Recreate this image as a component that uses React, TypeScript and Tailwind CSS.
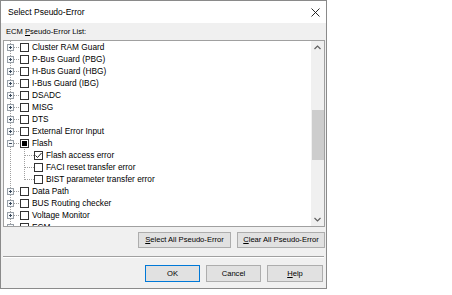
import React from 'react';

type Row = {
  label: string;
  level: 0 | 1;
  state?: 'on' | 'mixed';
  expanded?: boolean;
  last?: boolean;
};

const rows: Row[] = [
  { label: 'Cluster RAM Guard', level: 0 },
  { label: 'P-Bus Guard (PBG)', level: 0 },
  { label: 'H-Bus Guard (HBG)', level: 0 },
  { label: 'I-Bus Guard (IBG)', level: 0 },
  { label: 'DSADC', level: 0 },
  { label: 'MISG', level: 0 },
  { label: 'DTS', level: 0 },
  { label: 'External Error Input', level: 0 },
  { label: 'Flash', level: 0, expanded: true, state: 'mixed' },
  { label: 'Flash access error', level: 1, state: 'on' },
  { label: 'FACI reset transfer error', level: 1 },
  { label: 'BIST parameter transfer error', level: 1, last: true },
  { label: 'Data Path', level: 0 },
  { label: 'BUS Routing checker', level: 0 },
  { label: 'Voltage Monitor', level: 0 },
  { label: 'ECM', level: 0 },
];

const dot = { stroke: '#a0a0a0', strokeWidth: 1, strokeDasharray: '1 1' };

function TreeLines({ row }: { row: Row }) {
  if (row.level === 1) {
    return (
      <svg width="30" height="12" className="shrink-0">
        <line x1="6.5" y1="0" x2="6.5" y2="12" {...dot} />
        <line x1="20.5" y1="0" x2="20.5" y2={row.last ? 7 : 12} {...dot} />
        <line x1="21" y1="6.5" x2="30" y2="6.5" {...dot} />
      </svg>
    );
  }
  return (
    <svg width="16" height="12" className="shrink-0">
      <line x1="6.5" y1="0" x2="6.5" y2="12" {...dot} />
      <line x1="10" y1="6.5" x2="16" y2="6.5" {...dot} />
      <rect x="3.5" y="3.5" width="6" height="6" fill="#f7f9fb" stroke="#98a0a8" />
      <line x1="5" y1="6.5" x2="8" y2="6.5" stroke="#3a4a5c" />
      {!row.expanded && <line x1="6.5" y1="5" x2="6.5" y2="8" stroke="#3a4a5c" />}
    </svg>
  );
}

function Check({ state }: { state?: 'on' | 'mixed' }) {
  return (
    <span className="w-[9px] h-[9px] shrink-0 border border-[#333333] bg-white flex items-center justify-center">
      {state === 'mixed' && <span className="w-[5px] h-[5px] bg-black" />}
      {state === 'on' && (
        <svg width="7" height="7" viewBox="0 0 7 7">
          <polyline points="0.5,3.5 2.5,5.5 6.5,1" fill="none" stroke="#222" strokeWidth="1" />
        </svg>
      )}
    </span>
  );
}

function Btn({ children, w, primary }: { children: React.ReactNode; w: string; primary?: boolean }) {
  return (
    <div
      className={`${w} h-full flex items-center justify-center bg-[#e1e1e1] border ${
        primary ? 'border-[#0078d7]' : 'border-[#adadad]'
      } text-[7.6px] text-black`}
    >
      {children}
    </div>
  );
}

export default function App() {
  return (
    <div className="w-[452px] h-[295px] bg-white font-['Liberation_Sans',Arial,sans-serif]">
      <div className="w-[327px] h-[289px] border border-[#8a8a8a] bg-[#f0f0f0] flex flex-col">
        {/* title bar */}
        <div className="h-[22px] bg-white flex items-center justify-between pl-[7px] pr-[6px]">
          <span className="text-[8.5px] text-black">Select Pseudo-Error</span>
          <svg width="9" height="9" viewBox="0 0 9 9">
            <path d="M0.5 0.5 L8.5 8.5 M8.5 0.5 L0.5 8.5" stroke="#111" strokeWidth="0.9" />
          </svg>
        </div>

        <div className="h-[17px] flex items-center pl-[5px] text-[7.6px] text-black">
          ECM&nbsp;<span className="underline">P</span>seudo-Error List:
        </div>

        {/* list */}
        <div className="h-[187px] ml-[2px] mr-[1px] border border-[#a0a0a0] bg-white flex overflow-hidden">
          <div className="flex-1 pl-0 overflow-hidden">
            {rows.map((r) => (
              <div key={r.label} className="h-[12px] flex items-center">
                <TreeLines row={r} />
                <Check state={r.state} />
                <span className="ml-[3px] text-[8.3px] leading-[12px] whitespace-nowrap text-black">
                  {r.label}
                </span>
              </div>
            ))}
          </div>
          <div className="w-[13px] bg-[#f0f0f0] flex flex-col">
            <div className="h-[13px] flex items-center justify-center">
              <svg width="7" height="5" viewBox="0 0 7 5">
                <polyline points="0.5,4 3.5,1 6.5,4" fill="none" stroke="#606060" strokeWidth="1.2" />
              </svg>
            </div>
            <div className="h-[56px]" />
            <div className="h-[50px] ml-[1px] bg-[#cdcdcd]" />
            <div className="flex-1" />
            <div className="h-[13px] flex items-center justify-center">
              <svg width="7" height="5" viewBox="0 0 7 5">
                <polyline points="0.5,1 3.5,4 6.5,1" fill="none" stroke="#606060" strokeWidth="1.2" />
              </svg>
            </div>
          </div>
        </div>

        <div className="mt-[5px] h-[16px] flex justify-end gap-[6px] pr-[1px]">
          <Btn w="w-[93px]">
            <span>
              <span className="underline">S</span>elect All Pseudo-Error
            </span>
          </Btn>
          <Btn w="w-[88px]">
            <span>
              <span className="underline">C</span>lear All Pseudo-Error
            </span>
          </Btn>
        </div>

        <div className="mt-[8px] mx-[2px] h-[2px] border-t border-[#a0a0a0] border-b border-b-white" />

        <div className="mt-[7px] h-[17px] flex justify-end gap-[6px] pr-[3px]">
          <Btn w="w-[55px]" primary>
            OK
          </Btn>
          <Btn w="w-[55px]">Cancel</Btn>
          <Btn w="w-[56px]">
            <span>
              <span className="underline">H</span>elp
            </span>
          </Btn>
        </div>
      </div>
    </div>
  );
}
